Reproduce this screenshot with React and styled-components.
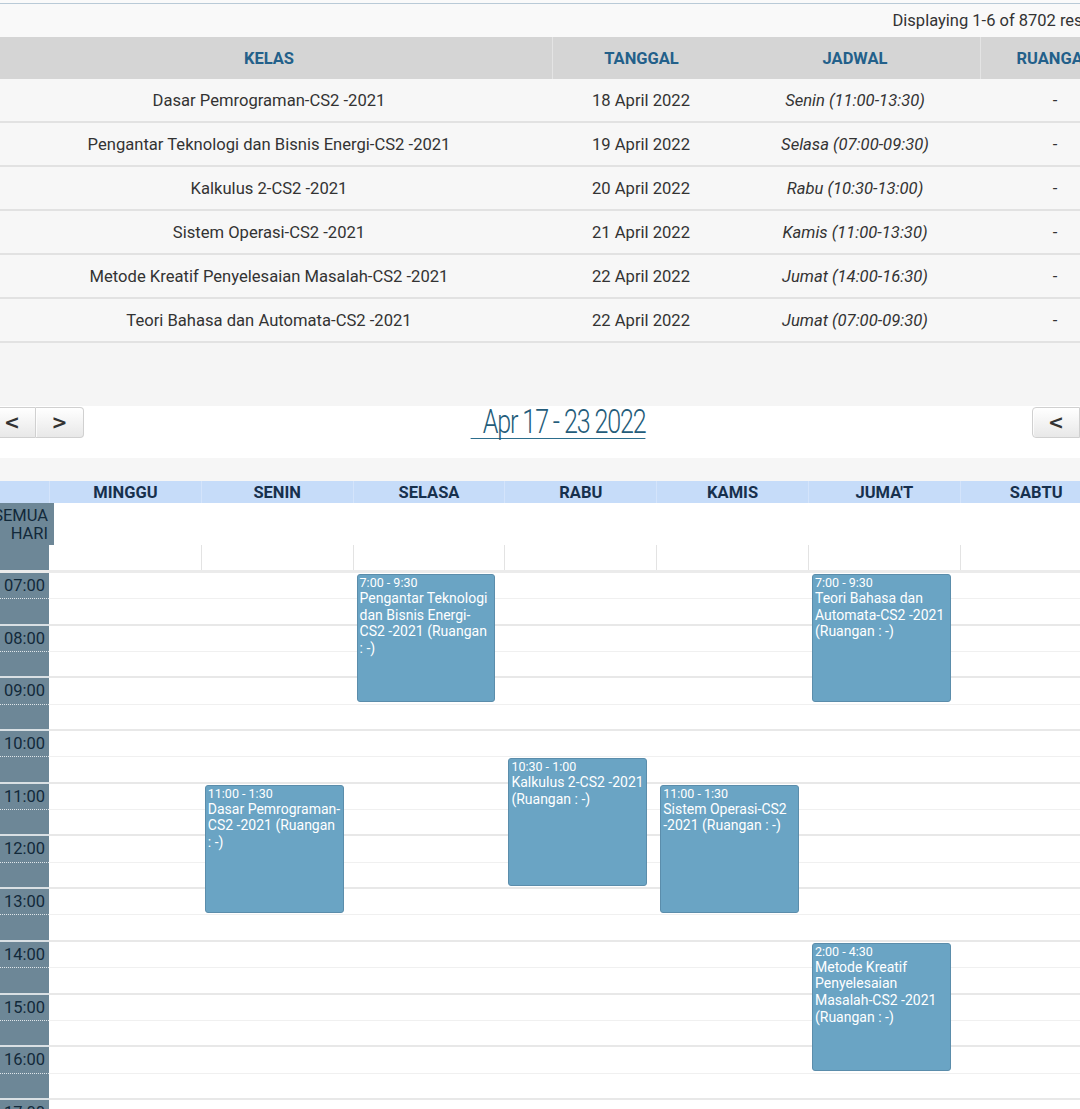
import React from "react";
import styled, { createGlobalStyle } from "styled-components";

const HOUR = 52.7;
const DAYS = ["MINGGU", "SENIN", "SELASA", "RABU", "KAMIS", "JUMA'T", "SABTU"];
const HOURS = ["07:00", "08:00", "09:00", "10:00", "11:00", "12:00", "13:00", "14:00", "15:00", "16:00", "17:00", "18:00"];
const COLS = "63px repeat(7, 151.8px)";

const rows = [
  { kelas: "Dasar Pemrograman-CS2 -2021", tanggal: "18 April 2022", jadwal: "Senin (11:00-13:30)" },
  { kelas: "Pengantar Teknologi dan Bisnis Energi-CS2 -2021", tanggal: "19 April 2022", jadwal: "Selasa (07:00-09:30)" },
  { kelas: "Kalkulus 2-CS2 -2021", tanggal: "20 April 2022", jadwal: "Rabu (10:30-13:00)" },
  { kelas: "Sistem Operasi-CS2 -2021", tanggal: "21 April 2022", jadwal: "Kamis (11:00-13:30)" },
  { kelas: "Metode Kreatif Penyelesaian Masalah-CS2 -2021", tanggal: "22 April 2022", jadwal: "Jumat (14:00-16:30)" },
  { kelas: "Teori Bahasa dan Automata-CS2 -2021", tanggal: "22 April 2022", jadwal: "Jumat (07:00-09:30)" },
];

const events = [
  { day: 1, start: 11, time: "11:00 - 1:30", title: "Dasar Pemrograman-CS2 -2021 (Ruangan : -)" },
  { day: 2, start: 7, time: "7:00 - 9:30", title: "Pengantar Teknologi dan Bisnis Energi-CS2 -2021 (Ruangan : -)" },
  { day: 3, start: 10.5, time: "10:30 - 1:00", title: "Kalkulus 2-CS2 -2021 (Ruangan : -)" },
  { day: 4, start: 11, time: "11:00 - 1:30", title: "Sistem Operasi-CS2 -2021 (Ruangan : -)" },
  { day: 5, start: 7, time: "7:00 - 9:30", title: "Teori Bahasa dan Automata-CS2 -2021 (Ruangan : -)" },
  { day: 5, start: 14, time: "2:00 - 4:30", title: "Metode Kreatif Penyelesaian Masalah-CS2 -2021 (Ruangan : -)" },
];

const GlobalStyle = createGlobalStyle`
  html, body {
    margin: 0;
    padding: 0;
    height: 1109px;
    overflow: hidden;
    background: #f5f5f5;
  }
  body {
    font-family: Roboto, "Liberation Sans", sans-serif;
    color: #333;
  }
`;

const Page = styled.div`
  width: 1144px;
  margin-left: -14px;
  padding-top: 3px;
  background: #fafafa;
`;

const Summary = styled.div`
  display: flex;
  justify-content: flex-end;
  align-items: center;
  height: 33px;
  padding-right: 16px;
  border-top: 1px solid #b9cad7;
  background: #f9f9f9;
  font-size: 16.5px;
  color: #333;
`;

const Table = styled.div`
  display: grid;
  grid-template-columns: 566px 178px 250px 150px;
`;

const HeadCell = styled.div`
  height: 42px;
  display: flex;
  align-items: center;
  justify-content: center;
  background: #d5d5d5;
  border-left: ${(p) => (p.$divider ? "1px solid #e4e4e4" : "none")};
  font-weight: 700;
  font-size: 16.5px;
  color: #23608a;
`;

const Cell = styled.div`
  height: 42px;
  display: flex;
  align-items: center;
  justify-content: center;
  background: #f7f7f7;
  border-bottom: 2px solid #e2e2e2;
  font-size: 16.6px;
  font-style: ${(p) => (p.$italic ? "italic" : "normal")};
  color: #333;
`;

const Gap = styled.div`
  height: 63px;
  background: #f5f5f5;
`;

const Toolbar = styled.div`
  display: grid;
  grid-template-columns: 1fr auto 1fr;
  align-items: start;
  height: 51px;
  padding: 1px 2px 0;
  background: #fff;
`;

const ButtonGroup = styled.div`
  display: flex;
  justify-self: ${(p) => (p.$end ? "end" : "start")};
`;

const NavButton = styled.button`
  width: 48px;
  height: 31px;
  padding: 0;
  border: 1px solid #d0d0d0;
  border-left-width: ${(p) => (p.$first ? "1px" : "0")};
  border-radius: ${(p) => (p.$first ? "4px 0 0 4px" : "0 4px 4px 0")};
  background: linear-gradient(#ffffff, #e8e8e8);
  box-shadow: inset 1px 0 0 rgba(255, 255, 255, 0.8);
  font-family: "DejaVu Sans", sans-serif;
  font-size: 19px;
  font-weight: 700;
  color: #333;
  line-height: 29px;
`;

const Title = styled.h2`
  margin: 0;
  padding: 0 0 1px 16px;
  border-bottom: 1px solid #2c6d8c;
  font-size: 33px;
  font-weight: 300;
  letter-spacing: -1.5px;
  line-height: 30px;
  color: #245c7a;
  transform: scaleX(0.76);
`;

const Band = styled.div`
  height: 23px;
  background: #f6f6f6;
`;

const Calendar = styled.div`
  background: #fff;
`;

const DayHeader = styled.div`
  display: grid;
  grid-template-columns: ${COLS};
  height: 22px;
  background: #c6dcf9;
`;

const DayName = styled.div`
  display: flex;
  align-items: center;
  justify-content: center;
  border-left: ${(p) => (p.$axis ? "none" : "1px solid #d4e4fb")};
  font-weight: 700;
  font-size: 16.5px;
  color: #17304d;
`;

const AllDayRow = styled.div`
  display: grid;
  grid-template-columns: ${COLS};
  height: 67px;
  border-bottom: 3px solid #ebebeb;
`;

const AllDayAxis = styled.div`
  display: flex;
  flex-direction: column;
`;

const AllDayLabel = styled.div`
  width: 68px;
  height: 42px;
  padding: 4px 6px 0 0;
  box-sizing: border-box;
  background: #6d8797;
  text-align: right;
  font-size: 16.5px;
  line-height: 18px;
  color: #12293a;
`;

const AxisFill = styled.div`
  flex: 1;
  background: #6d8797;
`;

const AllDayCell = styled.div`
  display: flex;
  flex-direction: column;
  justify-content: flex-end;
`;

const AllDayFoot = styled.div`
  height: 25px;
  border-left: ${(p) => (p.$line ? "1px solid #e3e3e3" : "none")};
`;

const TimeBody = styled.div`
  display: grid;
  grid-template-columns: ${COLS};
`;

const Axis = styled.div`
  background: #6d8797;
`;

const HourCell = styled.div`
  height: ${HOUR}px;
  box-sizing: border-box;
  border-bottom: 2px solid #d9e0e4;
`;

const HourLabel = styled.div`
  height: ${HOUR / 2}px;
  box-sizing: border-box;
  border-bottom: 1px dotted #dfe6ea;
  padding-right: 4px;
  text-align: right;
  font-size: 16.5px;
  line-height: 25px;
  color: #12293a;
`;

const DaysArea = styled.div`
  grid-column: 2 / -1;
  position: relative;
`;

const Slot = styled.div`
  height: ${HOUR / 2}px;
  box-sizing: border-box;
  border-bottom: ${(p) => (p.$hour ? "2px solid #e8e8e8" : "1px solid #f0f0f0")};
`;

const DayColumns = styled.div`
  position: absolute;
  inset: 0;
  display: grid;
  grid-template-columns: repeat(7, 151.8px);
`;

const DayColumn = styled.div`
  position: relative;
`;

const Event = styled.div`
  position: absolute;
  left: 4px;
  right: 9px;
  box-sizing: border-box;
  padding: 1px 1px 1px 2px;
  border: 1px solid #5b8dab;
  border-radius: 3px;
  background: #6aa4c4;
  color: #fff;
  overflow: hidden;
`;

const EventTime = styled.div`
  font-size: 12.5px;
  line-height: 14px;
`;

const EventTitle = styled.div`
  font-size: 14px;
  line-height: 16.6px;
`;

export default function App() {
  return (
    <>
      <GlobalStyle />
      <Page>
        <Summary>Displaying 1-6 of 8702 results.</Summary>
        <Table>
          <HeadCell>KELAS</HeadCell>
          <HeadCell $divider>TANGGAL</HeadCell>
          <HeadCell>JADWAL</HeadCell>
          <HeadCell $divider>RUANGAN</HeadCell>
          {rows.map((r) => (
            <React.Fragment key={r.kelas}>
              <Cell>{r.kelas}</Cell>
              <Cell>{r.tanggal}</Cell>
              <Cell $italic>{r.jadwal}</Cell>
              <Cell>-</Cell>
            </React.Fragment>
          ))}
        </Table>
        <Gap />
        <Toolbar>
          <ButtonGroup>
            <NavButton $first>&lt;</NavButton>
            <NavButton>&gt;</NavButton>
          </ButtonGroup>
          <Title>Apr 17 - 23 2022</Title>
          <ButtonGroup $end>
            <NavButton $first>&lt;</NavButton>
            <NavButton>&gt;</NavButton>
          </ButtonGroup>
        </Toolbar>
        <Band />
        <Calendar>
          <DayHeader>
            <DayName $axis />
            {DAYS.map((d) => (
              <DayName key={d}>{d}</DayName>
            ))}
          </DayHeader>
          <AllDayRow>
            <AllDayAxis>
              <AllDayLabel>
                SEMUA
                <br />
                HARI
              </AllDayLabel>
              <AxisFill />
            </AllDayAxis>
            {DAYS.map((d, i) => (
              <AllDayCell key={d}>
                <AllDayFoot $line={i > 0} />
              </AllDayCell>
            ))}
          </AllDayRow>
          <TimeBody>
            <Axis>
              {HOURS.map((h) => (
                <HourCell key={h}>
                  <HourLabel>{h}</HourLabel>
                </HourCell>
              ))}
            </Axis>
            <DaysArea>
              {HOURS.map((h) => (
                <React.Fragment key={h}>
                  <Slot />
                  <Slot $hour />
                </React.Fragment>
              ))}
              <DayColumns>
                {DAYS.map((d, i) => (
                  <DayColumn key={d}>
                    {events
                      .filter((e) => e.day === i)
                      .map((e) => (
                        <Event
                          key={e.title}
                          style={{ top: (e.start - 7) * HOUR + 1, height: 2.5 * HOUR - 4 }}
                        >
                          <EventTime>{e.time}</EventTime>
                          <EventTitle>{e.title}</EventTitle>
                        </Event>
                      ))}
                  </DayColumn>
                ))}
              </DayColumns>
            </DaysArea>
          </TimeBody>
        </Calendar>
      </Page>
    </>
  );
}
